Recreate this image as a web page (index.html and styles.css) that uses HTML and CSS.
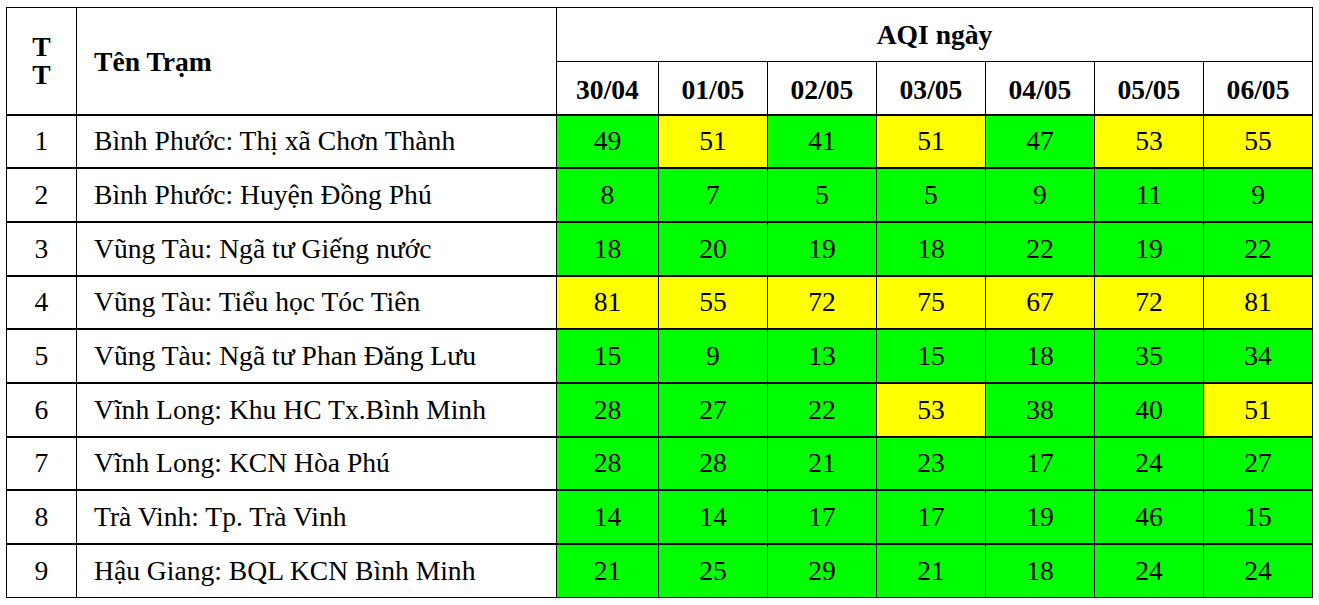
FILE: index.html
```html
<!DOCTYPE html>
<html lang="vi">
<head>
<meta charset="utf-8">
<title>AQI ngày</title>
<link rel="stylesheet" href="styles.css">
</head>
<body>
<table class="aqi">
  <colgroup>
    <col class="c-tt"><col class="c-name">
    <col class="c-d0"><col class="c-d"><col class="c-d"><col class="c-d"><col class="c-d"><col class="c-d"><col class="c-d">
  </colgroup>
  <thead>
    <tr class="h1">
      <th rowspan="2" class="tt">TT</th>
      <th rowspan="2" class="name">Tên Trạm</th>
      <th colspan="7">AQI ngày</th>
    </tr>
    <tr class="h2">
      <th>30/04</th><th>01/05</th><th>02/05</th><th>03/05</th><th>04/05</th><th>05/05</th><th>06/05</th>
    </tr>
  </thead>
  <tbody>
    <tr><td class="tt">1</td><td class="name">Bình Phước: Thị xã Chơn Thành</td><td class="g">49</td><td class="y">51</td><td class="g">41</td><td class="y">51</td><td class="g">47</td><td class="y">53</td><td class="y">55</td></tr>
    <tr><td class="tt">2</td><td class="name">Bình Phước: Huyện Đồng Phú</td><td class="g">8</td><td class="g">7</td><td class="g">5</td><td class="g">5</td><td class="g">9</td><td class="g">11</td><td class="g">9</td></tr>
    <tr><td class="tt">3</td><td class="name">Vũng Tàu: Ngã tư Giếng nước</td><td class="g">18</td><td class="g">20</td><td class="g">19</td><td class="g">18</td><td class="g">22</td><td class="g">19</td><td class="g">22</td></tr>
    <tr><td class="tt">4</td><td class="name">Vũng Tàu: Tiểu học Tóc Tiên</td><td class="y">81</td><td class="y">55</td><td class="y">72</td><td class="y">75</td><td class="y">67</td><td class="y">72</td><td class="y">81</td></tr>
    <tr><td class="tt">5</td><td class="name">Vũng Tàu: Ngã tư Phan Đăng Lưu</td><td class="g">15</td><td class="g">9</td><td class="g">13</td><td class="g">15</td><td class="g">18</td><td class="g">35</td><td class="g">34</td></tr>
    <tr><td class="tt">6</td><td class="name">Vĩnh Long: Khu HC Tx.Bình Minh</td><td class="g">28</td><td class="g">27</td><td class="g">22</td><td class="y">53</td><td class="g">38</td><td class="g">40</td><td class="y">51</td></tr>
    <tr><td class="tt">7</td><td class="name">Vĩnh Long: KCN Hòa Phú</td><td class="g">28</td><td class="g">28</td><td class="g">21</td><td class="g">23</td><td class="g">17</td><td class="g">24</td><td class="g">27</td></tr>
    <tr><td class="tt">8</td><td class="name">Trà Vinh: Tp. Trà Vinh</td><td class="g">14</td><td class="g">14</td><td class="g">17</td><td class="g">17</td><td class="g">19</td><td class="g">46</td><td class="g">15</td></tr>
    <tr><td class="tt">9</td><td class="name">Hậu Giang: BQL KCN Bình Minh</td><td class="g">21</td><td class="g">25</td><td class="g">29</td><td class="g">21</td><td class="g">18</td><td class="g">24</td><td class="g">24</td></tr>
  </tbody>
</table>
</body>
</html>
```

FILE: styles.css
```css
html, body {
  margin: 0;
  padding: 0;
  background: #ffffff;
}

body {
  padding: 7px 0 0 6px;
  font-family: "Liberation Serif", "Times New Roman", serif;
  color: #000;
}

.aqi {
  border-collapse: collapse;
  table-layout: fixed;
  width: 1305px;
  font-family: "Liberation Serif", "Times New Roman", serif;
  font-size: 27.6px;
}

.c-tt { width: 70px; }
.c-name { width: 480px; }
.c-d0 { width: 102px; }
.c-d { width: 109px; }

.aqi th,
.aqi td {
  border: 1px solid #000;
  padding: 0;
  text-align: center;
  vertical-align: middle;
  line-height: 30px;
}

.aqi th {
  font-weight: bold;
}

.h1 { height: 54px; }
.h2 { height: 53px; }

.h2 th {
  border-bottom: 2px solid #000;
  padding-top: 4px;
}

.h1 th.tt,
.h1 th.name {
  border-bottom: 2px solid #000;
}

.h1 th.tt {
  padding: 0 24px;
  line-height: 28px;
  word-break: break-all;
}

.aqi .name {
  text-align: left;
  padding-left: 17px;
}

.h1 th.name {
  padding-top: 2px;
}

.aqi tbody tr {
  height: 53.7px;
}

.aqi tbody td {
  border-bottom: 2px solid #000;
}

.aqi tbody tr:last-child td {
  border-bottom: 1px solid #000;
}

.g { background: #00ff00; }
.y { background: #ffff00; }
```
